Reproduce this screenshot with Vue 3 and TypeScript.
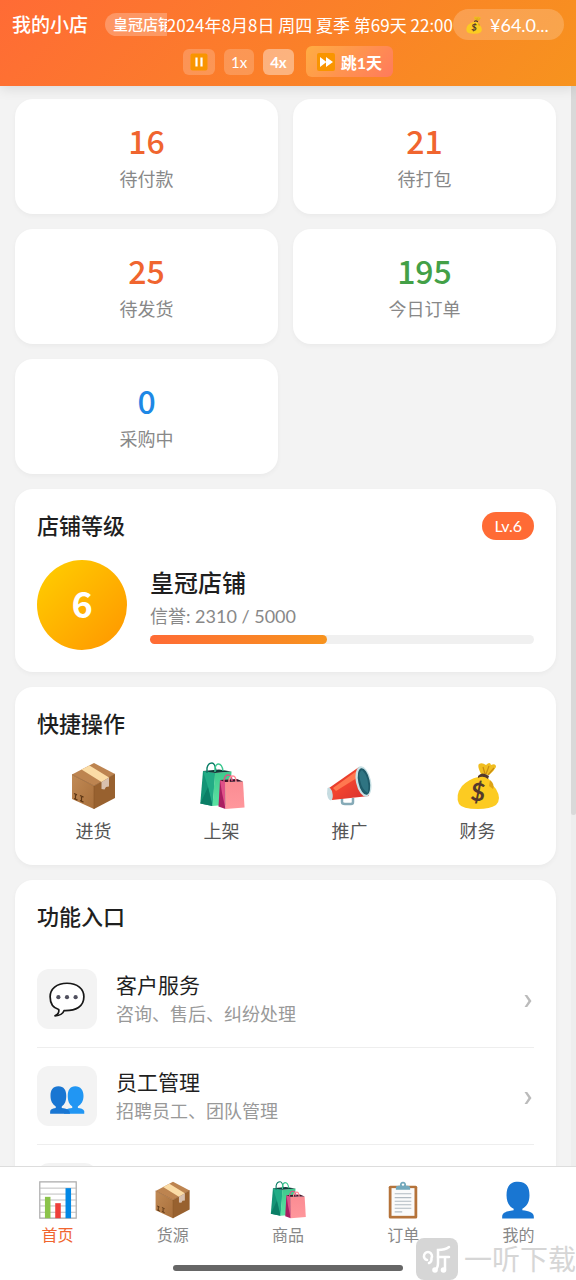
<script setup lang="ts">
import { ref } from 'vue'

interface Stat { value: number; label: string; tone: string }
interface Entry { icon: string; label: string }
interface Feature { icon: string; name: string; desc: string }

const stats: Stat[] = [
  { value: 16, label: '待付款', tone: 'orange' },
  { value: 21, label: '待打包', tone: 'orange' },
  { value: 25, label: '待发货', tone: 'orange' },
  { value: 195, label: '今日订单', tone: 'green' },
  { value: 0, label: '采购中', tone: 'blue' },
]

const actions: Entry[] = [
  { icon: 'box', label: '进货' },
  { icon: 'bags', label: '上架' },
  { icon: 'horn', label: '推广' },
  { icon: 'money', label: '财务' },
]

const features: Feature[] = [
  { icon: 'chat', name: '客户服务', desc: '咨询、售后、纠纷处理' },
  { icon: 'people', name: '员工管理', desc: '招聘员工、团队管理' },
]

const tabs: Entry[] = [
  { icon: 'chart', label: '首页' },
  { icon: 'box', label: '货源' },
  { icon: 'bags', label: '商品' },
  { icon: 'clipboard', label: '订单' },
  { icon: 'person', label: '我的' },
]

const speed = ref(4)
const activeTab = ref('首页')
const reputation = 2310
const target = 5000
const progress = `${(reputation / target) * 100}%`
</script>

<template>
  <div class="app">
    <svg class="defs" aria-hidden="true">
      <defs>
        <linearGradient id="boxLeft" x1="0" y1="0" x2="1" y2="1">
          <stop offset="0" stop-color="#c18a55" /><stop offset="1" stop-color="#a86f3b" />
        </linearGradient>
        <linearGradient id="hornRed" x1="0" y1="0" x2="1" y2="1">
          <stop offset="0" stop-color="#c62a1f" /><stop offset="0.45" stop-color="#f3442f" /><stop offset="1" stop-color="#d32f2f" />
        </linearGradient>
        <linearGradient id="bagPink" x1="0" y1="0" x2="0" y2="1">
          <stop offset="0" stop-color="#fb8c93" /><stop offset="1" stop-color="#ff979c" />
        </linearGradient>
        <linearGradient id="bagGreen" x1="0" y1="0" x2="0" y2="1">
          <stop offset="0" stop-color="#3fc98c" /><stop offset="1" stop-color="#5ce3a4" />
        </linearGradient>
      </defs>

      <symbol id="box" viewBox="0 0 48 48">
        <path d="M24 1 45 12 24 24 2 12.5Z" fill="#bd8450" />
        <path d="M2 12.5 24 24V47L2 37Z" fill="url(#boxLeft)" />
        <path d="M24 24 45 12V36L24 47Z" fill="#98612f" />
        <path d="M24 24V47M2 12.5 24 24 45 12" fill="none" stroke="#8a5527" stroke-width=".6" />
        <path d="M11.500 7.500 19.500 3.500 39 15.500 31.500 20Z" fill="#fbdca6" />
        <path d="M31.500 20 39 15.500V24.500L36 25 34.500 27.500 31.500 27Z" fill="#d8c0ae" />
        <path d="M4 31.500l3 1.400M5.500 32v5M4 36.500l3.500 1.600M10 33.500l3.500 1.600M11.500 35v4M10 38.500l3.500 1.600" stroke="#5d3715" stroke-width="1.200" fill="none" />
      </symbol>

      <symbol id="bags" viewBox="0 0 48 48">
        <path d="M5 9 17 11 14.500 44 2.300 41.500Z" fill="#149476" />
        <path d="M5 9 10 25 14.500 44 17 11Z" fill="#22ac86" />
        <path d="M2.300 41.500 10 25 14.500 44Z" fill="#0b7e66" />
        <path d="M17 11 33.500 9.500 31.500 42.500 14.500 44Z" fill="url(#bagGreen)" />
        <path d="M5 9 21 7.500 33.500 9.500 17 11Z" fill="#103c3a" />
        <path d="M9 11V6Q10 1 14 1 17 1 18 9" fill="none" stroke="#087c65" stroke-width="1.400" />
        <path d="M17 10V6Q18 2 20.500 2 24 2 25 9" fill="none" stroke="#3ac78f" stroke-width="1.400" />
        <path d="M22 18 27 20 27.500 47 20.500 44.500Z" fill="#a91e61" />
        <path d="M22 18 24 31 27.500 47 27 20Z" fill="#df4f88" />
        <path d="M27 20 45 19.500 46.500 45.500 27.500 47Z" fill="url(#bagPink)" />
        <path d="M22 18 39 17 45 19.500 27 20Z" fill="#421127" />
        <path d="M26 20V18Q27 13 30 13 34 13 34 19" fill="none" stroke="#df5286" stroke-width="1.400" />
        <path d="M31 20V18Q32 14 35 14 38 14 38 20" fill="none" stroke="#ff8c96" stroke-width="1.400" />
      </symbol>

      <symbol id="horn" viewBox="0 0 48 48">
        <path d="M16 36v4q0 2 3 2h6q2 0 2-2v-4" fill="none" stroke="#86aab7" stroke-width="2.500" />
        <path d="M3 26 33 5 43 34 6 38Z" fill="url(#hornRed)" />
        <path d="M7 26 32 8 34 14 10 29Z" fill="#ff7850" />
        <path d="M1.500 26Q4 24 6 29 8 37 5 38.500 2 38 1 32Z" fill="#c6dce1" />
        <ellipse cx="37.500" cy="19.500" rx="7.500" ry="15.500" transform="rotate(-12 37.500 19.500)" fill="#c9e1e5" />
        <ellipse cx="38" cy="19.500" rx="5.700" ry="13.500" transform="rotate(-12 38 19.500)" fill="#1f5b69" />
        <path d="M36 8Q44 15 42 31 36 28 34 18 32 10 36 8Z" fill="#2f7482" />
      </symbol>

      <symbol id="money" viewBox="0 0 48 48">
        <path d="M27 12Q23 4 25 2 28 0 32 3 36-1 37 3 42 1 42 5 40 9 35 13Z" fill="#f0bd20" />
        <path d="M29 5 31 12M35 4 32 12M40 6 34 13" stroke="#c98d11" stroke-width="1.200" fill="none" />
        <path d="M24 15Q30 12 35 17 38 23 42 27 48 37 42 43 36 47 24 47 8 47 5 42 1 33 8 24 15 17 24 15Z" fill="#fccb22" />
        <path d="M36 18Q41 22 39 27L35 24Z" fill="#dda315" />
        <path d="M24 14Q28 9 35 14L34 17Q29 13 24 16Z" fill="#54392c" />
        <text x="24" y="39" text-anchor="middle" transform="rotate(7 24 30)" class="dollar">$</text>
      </symbol>

      <symbol id="chat" viewBox="0 0 48 48">
        <path d="M24 3C10 3 1.500 11 1.500 21 1.500 30 6 36 13 38 14 42 11 45 8 46.500 15 46 19 43 20 39.500 36 40 46.500 34 46.500 21 46.500 11 38 3 24 3Z" fill="#fff" stroke="#171717" stroke-width="2.300" stroke-linejoin="round" />
        <circle cx="12.500" cy="21.500" r="2.800" fill="#50505e" /><circle cx="24" cy="21.500" r="2.800" fill="#50505e" /><circle cx="35.500" cy="21.500" r="2.800" fill="#50505e" />
      </symbol>

      <symbol id="people" viewBox="0 0 48 48">
        <path d="M35 11C28 11 25 16 25 24 25 31 27 35 31 38V40C24 41 20 42 20 47.500H47V44C46 41 42 40.500 38.500 40V38C43 35 46 31 46 24 46 16 42 11 35 11Z" fill="#2196f3" />
        <path d="M12.500 11C5 11 2 16 2 24 2 31 5 35 9 38V40C4 41 1.500 42 1.500 45V47.500H28C28 42 23 41 17 40V38C21 35 23 31 23 24 23 16 20 11 12.500 11Z" fill="#1976d2" />
      </symbol>

      <symbol id="chart" viewBox="0 0 48 48">
        <path d="M1 1H47V47H1Z" fill="#fff" stroke="#aaa" stroke-width="1.500" />
        <path d="M1 9H47M1 16.500H47M1 24H47M1 31.500H47M1 39.500H47" stroke="#bcbcbc" stroke-width="1.200" />
        <path d="M7.500 20H14.500V47H7.500Z" fill="#8bc34a" />
        <path d="M20.500 28H27.500V47H20.500Z" fill="#ee403b" />
        <path d="M33.500 9H40.500V47H33.500Z" fill="#0288e5" />
      </symbol>

      <symbol id="clipboard" viewBox="0 0 48 48">
        <rect x="6" y="6" width="36" height="41.500" rx="2" fill="#b5733a" />
        <rect x="9.500" y="9" width="29" height="35" fill="#fafafa" />
        <path d="M13.500 16H34.500M13.500 21H34.500M13.500 25.500H34.500M13.500 30H34.500M13.500 34.500H34.500M13.500 39H23" stroke="#b1bac1" stroke-width="1.300" />
        <path d="M15 11V8Q15 6 18 6H20Q20 1 24 1 28 1 28 6H30Q33 6 33 8V11Z" fill="#73a9bc" />
        <circle cx="24" cy="4.500" r="1.500" fill="#fff" />
      </symbol>

      <symbol id="person" viewBox="0 0 48 48">
        <path d="M24 1C13 1 9.500 8 9.500 18 9.500 27 13 32 18.500 35V37C10 38 4 40 4 45V47.500H44V45C44 40 38 38 29.500 37V35C35 32 38.500 27 38.500 18 38.500 8 35 1 24 1Z" fill="#1976d2" />
      </symbol>

      <symbol id="pause" viewBox="0 0 18 18">
        <rect x=".5" y=".5" width="17" height="17" rx="2" fill="#f99500" />
        <path d="M6.500 4.500V13.500M11.500 4.500V13.500" stroke="#fff" stroke-width="2.200" />
      </symbol>

      <symbol id="forward" viewBox="0 0 18 18">
        <rect width="18" height="18" rx="2" fill="#f99500" />
        <path d="M3 4 9.500 9 3 14ZM9 4 16 9 9 14Z" fill="#fff" />
      </symbol>
    </svg>

    <header class="header">
      <div class="status">
        <div class="identity">
          <h1>我的小店</h1>
          <span class="rank">皇冠店铺</span>
        </div>
        <time class="date" datetime="2024-08-08T22:00">2024年8月8日 周四 夏季 第69天 22:00</time>
        <div class="balance">
          <svg aria-hidden="true"><use href="#money" /></svg>
          <span>¥64.0...</span>
        </div>
      </div>
      <div class="controls">
        <button class="speed" aria-label="暂停" @click="speed = 0"><svg aria-hidden="true"><use href="#pause" /></svg></button>
        <button class="speed" :class="{ selected: speed === 1 }" @click="speed = 1">1x</button>
        <button class="speed" :class="{ selected: speed === 4 }" @click="speed = 4">4x</button>
        <button class="skip"><svg aria-hidden="true"><use href="#forward" /></svg>跳1天</button>
      </div>
    </header>

    <div class="body">
      <main class="content">
        <section class="stats">
          <div v-for="s in stats" :key="s.label" class="card stat">
            <strong :class="s.tone">{{ s.value }}</strong>
            <span>{{ s.label }}</span>
          </div>
        </section>

        <section class="card">
          <div class="head">
            <h2>店铺等级</h2>
            <span class="level">Lv.6</span>
          </div>
          <div class="grade">
            <div class="medal">6</div>
            <div class="info">
              <h3>皇冠店铺</h3>
              <p>信誉: {{ reputation }} / {{ target }}</p>
              <div class="track" role="progressbar" aria-label="信誉" :aria-valuenow="reputation" aria-valuemin="0" :aria-valuemax="target">
                <div class="fill" :style="{ width: progress }"></div>
              </div>
            </div>
          </div>
        </section>

        <section class="card">
          <div class="head"><h2>快捷操作</h2></div>
          <div class="actions">
            <button v-for="a in actions" :key="a.label">
              <svg aria-hidden="true"><use :href="'#' + a.icon" /></svg>
              <span>{{ a.label }}</span>
            </button>
          </div>
        </section>

        <section class="card">
          <div class="head"><h2>功能入口</h2></div>
          <ul class="features">
            <li v-for="f in features" :key="f.name">
              <button>
                <span class="tile"><svg aria-hidden="true"><use :href="'#' + f.icon" /></svg></span>
                <span class="text">
                  <span class="name">{{ f.name }}</span>
                  <span class="desc">{{ f.desc }}</span>
                </span>
                <svg class="chevron" viewBox="0 0 8 18" aria-hidden="true"><path d="M.5 5H3.200L7.500 11 3.200 17H.5L4.500 11Z" /></svg>
              </button>
            </li>
            <li class="pending"><span class="tile"></span></li>
          </ul>
        </section>
      </main>
      <div class="scrollbar"><div class="thumb"></div></div>
    </div>

    <footer class="footer">
      <nav class="tabs">
        <button v-for="t in tabs" :key="t.label" :class="{ active: activeTab === t.label }" @click="activeTab = t.label">
          <svg aria-hidden="true"><use :href="'#' + t.icon" /></svg>
          <span>{{ t.label }}</span>
        </button>
      </nav>
      <div class="handle"></div>
    </footer>

    <div class="stamp">
      <svg viewBox="0 0 42 42" aria-hidden="true">
        <rect width="42" height="42" rx="8" fill="#d6d6d6" />
        <g fill="none" stroke="#fff" stroke-width="2.500" stroke-linecap="round">
          <path d="M11 22A4 4 0 1 1 15.500 20Q16 24 13 25" />
          <path d="M33 9Q29 12 22 12V25Q22 30 19 32" />
          <path d="M22 19H33M29 19V31" />
        </g>
        <circle cx="19" cy="32" r="2.800" fill="#fff" />
        <circle cx="27.500" cy="32" r="2.800" fill="#fff" />
      </svg>
      <span>一听下载</span>
    </div>
  </div>
</template>

<style>
body {
  margin: 0;
  background: #f3f3f3;
}
</style>

<style scoped>
.app {
  position: relative;
  display: flex;
  flex-direction: column;
  height: 100vh;
  overflow: hidden;
  background: #f3f3f3;
  color: #1f1f1f;
  font-family: Lato, "Noto Sans CJK SC", sans-serif;
  font-size: 18px;
}
.defs {
  position: absolute;
  width: 0;
  height: 0;
}
.dollar {
  font: 700 25px Lato, sans-serif;
  fill: #54392c;
}
h1, h2, h3, p, ul {
  margin: 0;
  padding: 0;
}
button {
  margin: 0;
  padding: 0;
  border: 0;
  background: none;
  color: inherit;
  font: inherit;
  cursor: pointer;
}
svg {
  display: block;
  flex: none;
}
.header {
  position: relative;
  z-index: 1;
  flex: none;
  display: flex;
  flex-direction: column;
  gap: 6px;
  padding: 9px 12px;
  background: linear-gradient(135deg, #ff6b35, #f7931e);
  box-shadow: 0 3px 12px rgba(0, 0, 0, 0.1);
  color: #fff;
}
.status {
  display: flex;
  align-items: center;
  height: 31px;
}
.identity {
  flex: 1;
  min-width: 0;
  display: flex;
  align-items: center;
  gap: 17px;
  overflow: hidden;
  white-space: nowrap;
}
h1 {
  font-size: 19px;
  line-height: 28px;
  font-weight: 500;
}
.rank {
  padding: 0 8px;
  border-radius: 12px;
  background: rgba(255, 255, 255, 0.25);
  font-size: 15px;
  line-height: 23px;
  font-weight: 500;
}
.date {
  font-family: "Noto Sans CJK SC", sans-serif;
  font-size: 17px;
  line-height: 26px;
  white-space: nowrap;
}
.balance {
  flex: none;
  box-sizing: border-box;
  width: 111px;
  height: 31px;
  display: flex;
  align-items: center;
  gap: 7px;
  padding: 0 12px;
  border-radius: 16px;
  background: rgba(255, 255, 255, 0.2);
  font-size: 18px;
}
.balance svg {
  width: 18px;
  height: 18px;
}
.controls {
  display: flex;
  justify-content: center;
  align-items: center;
  gap: 9px;
}
.speed {
  height: 26px;
  padding: 0 7px;
  border-radius: 6px;
  background: rgba(255, 255, 255, 0.2);
  font-size: 15px;
}
.speed svg, .skip svg {
  width: 18px;
  height: 18px;
}
.speed.selected {
  background: rgba(255, 255, 255, 0.4);
  font-weight: 700;
}
.skip {
  display: flex;
  align-items: center;
  gap: 6px;
  height: 31px;
  margin-left: 3px;
  padding: 0 11px;
  border-radius: 6px;
  background: linear-gradient(135deg, #ffad42, #ff7a5c);
  font-size: 16px;
  font-weight: 700;
}
.body {
  flex: 1;
  min-height: 0;
  display: flex;
}
.content {
  flex: 1;
  min-width: 0;
  display: flex;
  flex-direction: column;
  gap: 15px;
  padding: 13px 15px 0;
  overflow-y: auto;
  scrollbar-width: none;
}
.scrollbar {
  flex: none;
  width: 5px;
  background: #eee;
}
.thumb {
  height: 67.5%;
  border-radius: 0 0 3px 3px;
  background: #d9d9d9;
}
.card {
  flex: none;
  padding: 22px;
  border-radius: 18px;
  background: #fff;
  box-shadow: 0 2px 5px rgba(0, 0, 0, 0.04);
}
.stats {
  flex: none;
  display: grid;
  grid-template-columns: 1fr 1fr;
  gap: 15px;
}
.stat {
  display: flex;
  flex-direction: column;
  align-items: center;
  gap: 8px;
}
.stat strong {
  font-family: "Noto Sans CJK SC", sans-serif;
  font-size: 32px;
  line-height: 38px;
  font-weight: 500;
}
.stat span {
  color: #888;
  line-height: 25px;
}
.orange { color: #f0652f; }
.green { color: #43a047; }
.blue { color: #1e88e5; }
.head {
  display: flex;
  align-items: center;
  justify-content: space-between;
  height: 30px;
  margin-bottom: 19px;
}
h2 {
  font-size: 22px;
  line-height: 30px;
  font-weight: 500;
}
.level {
  padding: 0 12px;
  border-radius: 14px;
  background: #ff6b35;
  color: #fff;
  font-size: 16px;
  line-height: 28px;
}
.grade {
  display: flex;
  align-items: center;
  gap: 23px;
}
.medal {
  flex: none;
  width: 90px;
  height: 90px;
  border-radius: 50%;
  background: linear-gradient(135deg, #ffd000, #ff9500);
  color: #fff;
  font-family: "Noto Sans CJK SC", sans-serif;
  font-size: 36px;
  line-height: 84px;
  font-weight: 700;
  text-align: center;
}
.info {
  flex: 1;
  min-width: 0;
}
h3 {
  font-size: 24px;
  line-height: 32px;
  font-weight: 500;
}
.info p {
  margin: 4px 0 6px;
  color: #888;
  line-height: 26px;
}
.track {
  height: 9px;
  border-radius: 5px;
  background: #f0f0f0;
}
.fill {
  height: 100%;
  border-radius: 5px;
  background: linear-gradient(90deg, #ff6b35, #f7931e);
}
.actions {
  display: grid;
  grid-template-columns: repeat(4, 1fr);
  gap: 15px;
}
.actions button {
  display: flex;
  flex-direction: column;
  align-items: center;
  gap: 9px;
  padding-top: 4px;
  color: #555;
  line-height: 24px;
}
.actions svg {
  width: 48px;
  height: 48px;
}
.features {
  list-style: none;
}
.features li {
  border-bottom: 1px solid #eee;
}
.features button {
  display: flex;
  align-items: center;
  gap: 19px;
  width: 100%;
  padding: 18px 0;
  text-align: left;
}
.features .pending {
  padding: 18px 0;
  border: 0;
}
.tile {
  flex: none;
  display: flex;
  align-items: center;
  justify-content: center;
  width: 60px;
  height: 60px;
  border-radius: 12px;
  background: #f3f3f3;
}
.tile svg {
  width: 36px;
  height: 36px;
}
.text {
  flex: 1;
  display: flex;
  flex-direction: column;
}
.name {
  font-size: 21px;
  line-height: 30px;
}
.desc {
  color: #999;
  line-height: 28px;
}
.chevron {
  width: 8px;
  height: 18px;
  margin-right: 2px;
  fill: #bbb;
}
.footer {
  flex: none;
  padding: 14px 0 9px;
  border-top: 1px solid #ddd;
  background: #fff;
}
.tabs {
  display: grid;
  grid-template-columns: repeat(5, 1fr);
}
.tabs button {
  display: flex;
  flex-direction: column;
  align-items: center;
  gap: 5px;
  color: #888;
  font-size: 16px;
  line-height: 22px;
}
.tabs .active {
  color: #f0652f;
}
.tabs svg {
  width: 38px;
  height: 38px;
}
.handle {
  width: 40%;
  height: 6px;
  margin: 19px auto 0;
  border-radius: 3px;
  background: #666;
}
.stamp {
  position: absolute;
  right: 0;
  bottom: 0;
  z-index: 2;
  display: flex;
  align-items: center;
  gap: 6px;
  color: #d6d6d6;
  font-size: 28px;
  line-height: 42px;
  pointer-events: none;
}
.stamp svg {
  width: 42px;
  height: 42px;
}
</style>
